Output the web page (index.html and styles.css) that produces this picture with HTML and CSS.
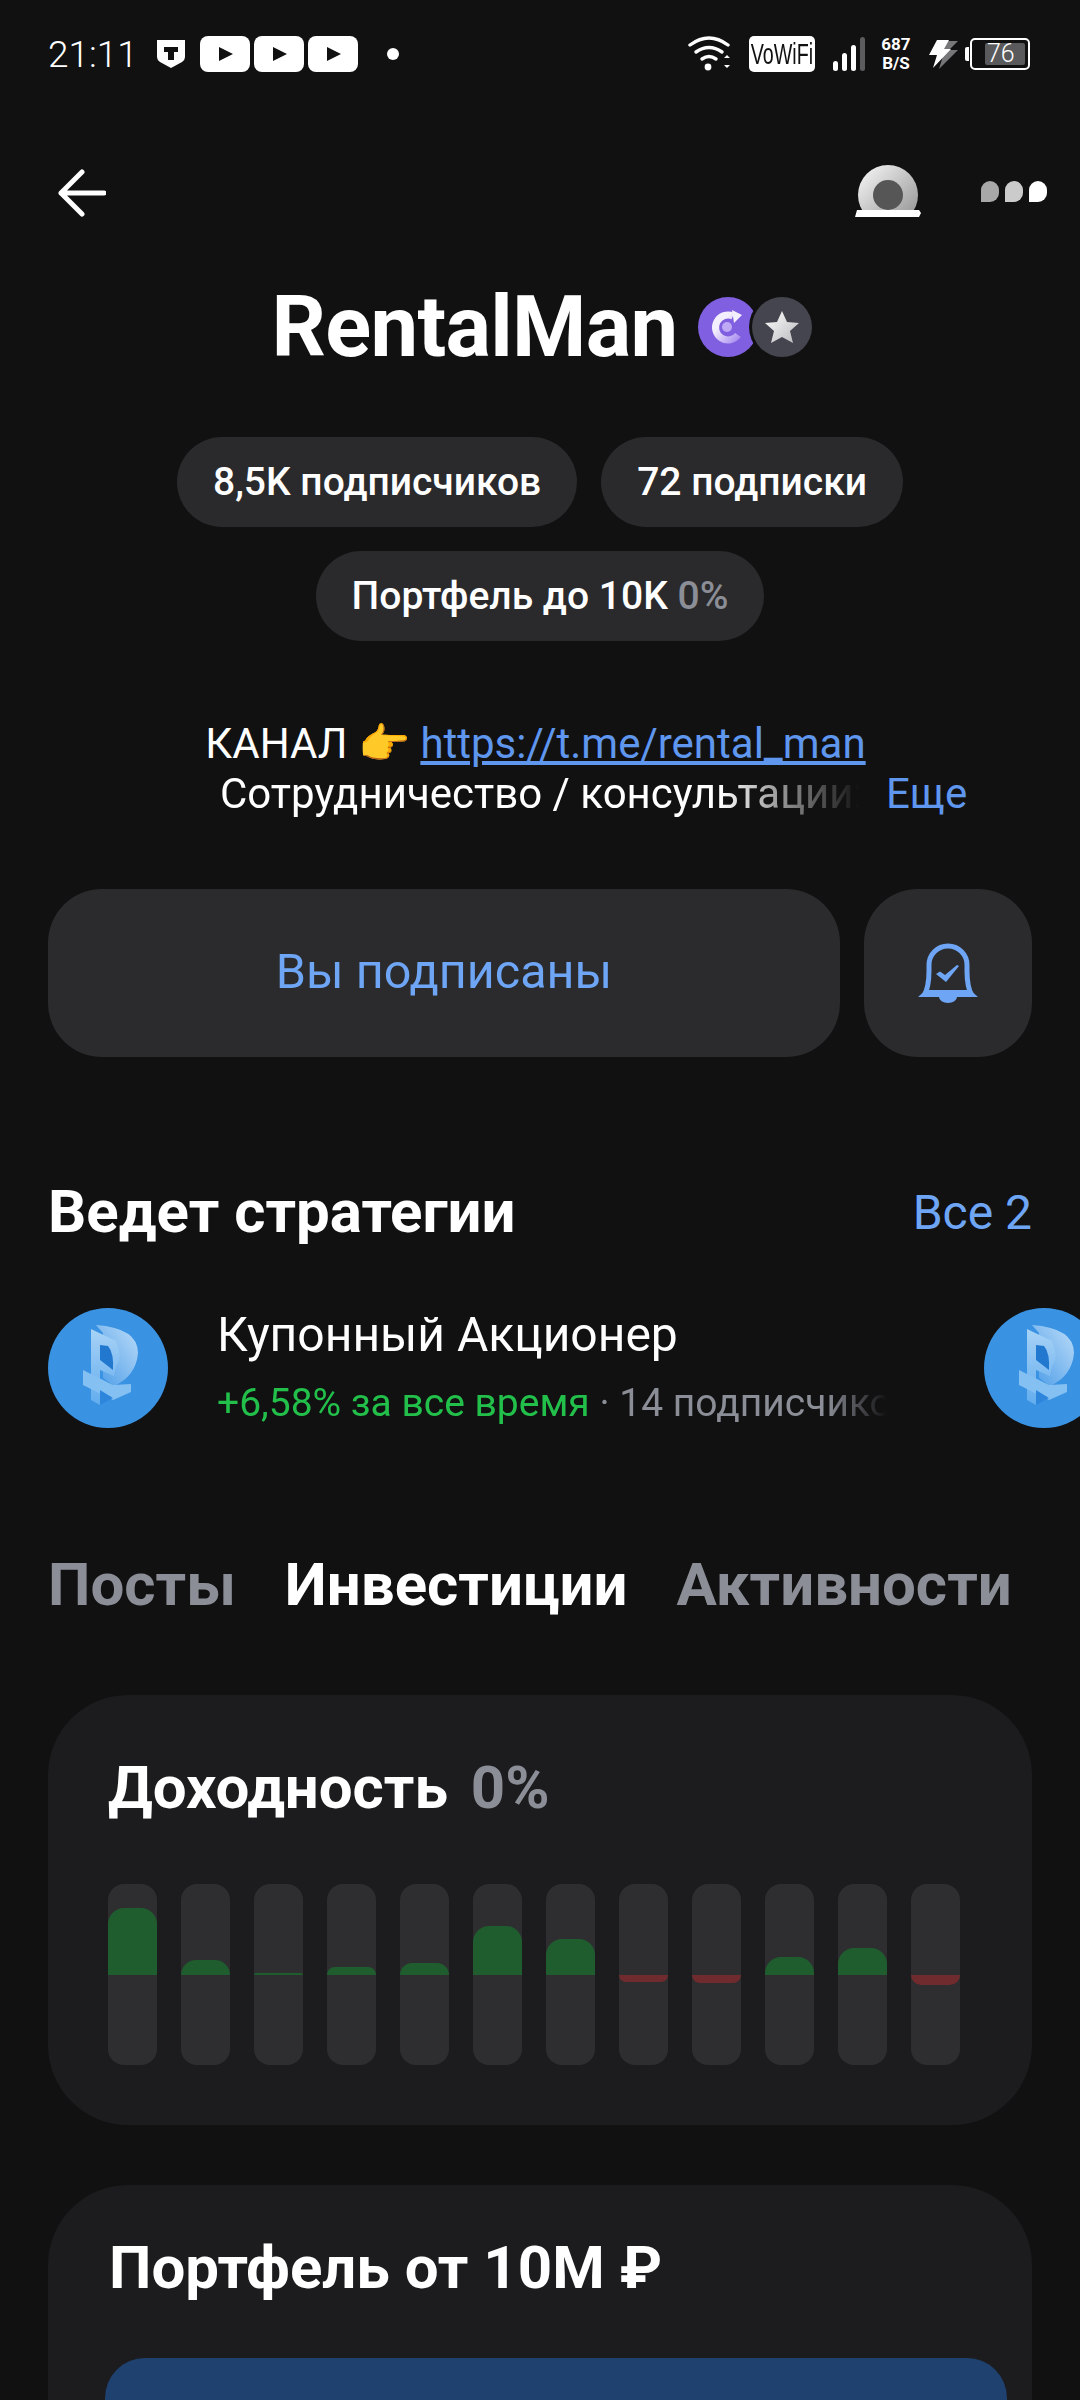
FILE: index.html
```html
<!DOCTYPE html>
<html lang="ru">

<head>
    <meta charset="UTF-8">
    <meta name="viewport" content="width=device-width, initial-scale=1.0">
    <title>RentalMan</title>
    <link rel="stylesheet" href="styles.css">
</head>

<body>
    <!-- Status bar -->
    <div class="statusBar">
        <div class="statusLeft">
            <span class="time">21:11</span>
            <svg class="shield" width="28" height="28" viewBox="0 0 28 28">
                <path d="M0 0h28v17q0 3-3 5l-11 6-11-6q-3-2-3-5z" fill="#fff"/>
                <path d="M7 7h14v5h-4v8h-6v-8H7z" fill="#111112"/>
            </svg>
            <div class="ytGroup">
                <svg width="50" height="36" viewBox="0 0 50 36"><rect width="50" height="36" rx="8" fill="#fff"/><path d="M19 11l14 7-14 7z" fill="#111112"/></svg>
                <svg width="50" height="36" viewBox="0 0 50 36"><rect width="50" height="36" rx="8" fill="#fff"/><path d="M19 11l14 7-14 7z" fill="#111112"/></svg>
                <svg width="50" height="36" viewBox="0 0 50 36"><rect width="50" height="36" rx="8" fill="#fff"/><path d="M19 11l14 7-14 7z" fill="#111112"/></svg>
            </div>
            <span class="statusDot"></span>
        </div>
        <div class="statusRight">
            <svg width="42" height="36" viewBox="0 0 42 36" fill="none" stroke="#fff" stroke-linecap="round">
                <path d="M2 9q19-14 38 0" stroke-width="3.4"/>
                <path d="M8 16q13-9 26 0" stroke-width="3.4"/>
                <path d="M14 23q7-5 14 0" stroke-width="3.4"/>
                <circle cx="20" cy="31" r="3.4" fill="#fff" stroke="none"/>
                <path d="M36 22l3-3 3 3zM36 29l3 3 3-3z" fill="#fff" stroke="none"/>
            </svg>
            <span class="vowifi"><span class="vowifiText">VoWiFi</span></span>
            <svg width="32" height="34" viewBox="0 0 32 34">
                <rect x="0" y="24" width="5" height="10" rx="2.5" fill="#fff"/>
                <rect x="9" y="16" width="5" height="18" rx="2.5" fill="#fff"/>
                <rect x="18" y="8" width="5" height="26" rx="2.5" fill="#fff"/>
                <rect x="27" y="0" width="5" height="34" rx="2.5" fill="#5c5c5e"/>
            </svg>
            <div class="netSpeed"><span>687</span><span>B/S</span></div>
            <svg class="bolt" width="30" height="30" viewBox="0 0 30 30">
                <path d="M14 2h15l-9 9h9L10 30l4-13H8z" fill="#77777a"/>
                <path d="M8 1h12l-5 9h7L4 29l4-13H0z" fill="#fff"/>
            </svg>
            <div class="battery">
                <span class="batteryNub"></span>
                <div class="batteryBody"><span class="batteryFill"></span><span class="batteryText">76</span></div>
            </div>
        </div>
    </div>

    <!-- Top actions -->
    <div class="topBar">
        <svg class="backArrow" width="48" height="48" viewBox="0 0 48 48" fill="none" stroke="#fff" stroke-width="5" stroke-linecap="round" stroke-linejoin="round">
            <path d="M46 24H3M24 3L3 24l21 21"/>
        </svg>
        <div class="topActions">
            <svg width="66" height="52" viewBox="0 0 66 52">
                <defs>
                    <linearGradient id="lens" x1="0" y1="0" x2="1" y2="1">
                        <stop offset="0" stop-color="#fafafa"/>
                        <stop offset="1" stop-color="#8d8d8d"/>
                    </linearGradient>
                </defs>
                <circle cx="33" cy="30" r="30" fill="url(#lens)"/>
                <circle cx="33" cy="30" r="15" fill="#565656"/>
                <path d="M0 52l2-7h62l2 3-2 4z" fill="#fff"/>
            </svg>
            <div class="moreDots">
                <span class="moreDot moreDot1"></span>
                <span class="moreDot moreDot2"></span>
                <span class="moreDot moreDot3"></span>
            </div>
        </div>
    </div>

    <!-- Profile -->
    <div class="profile">
        <div class="nameRow">
            <h1>RentalMan</h1>
            <div class="badges">
                <svg class="badgePurple" width="60" height="60" viewBox="0 0 60 60">
                    <defs>
                        <linearGradient id="coin" x1="0" y1="0" x2="1" y2="1">
                            <stop offset="0.3" stop-color="#f4effe"/>
                            <stop offset="1" stop-color="#a98ff0"/>
                        </linearGradient>
                    </defs>
                    <circle cx="30" cy="30" r="30" fill="#8060e0"/>
                    <path d="M35 19a12.500 12.500 0 1 0 5 19" fill="none" stroke="url(#coin)" stroke-width="7"/>
                    <circle cx="29" cy="30" r="5" fill="#bfa9f5"/>
                    <path d="M34 13l10 5-8 8z" fill="#f4effe"/>
                </svg>
                <div class="badgeGrey">
                    <svg width="36" height="36" viewBox="0 0 36 36">
                        <defs>
                            <linearGradient id="starFill" x1="0" y1="0" x2="1" y2="1">
                                <stop offset="0" stop-color="#ffffff"/>
                                <stop offset="1" stop-color="#b9b9bd"/>
                            </linearGradient>
                        </defs>
                        <path d="M18 2l5 11 12 1-9 8 3 12-11-6-11 6 3-12-9-8 12-1z" fill="url(#starFill)"/>
                    </svg>
                </div>
            </div>
        </div>
        <div class="pills">
            <span class="pill">8,5K подписчиков</span>
            <span class="pill">72 подписки</span>
            <span class="pill">Портфель до 10K <span class="muted">0%</span></span>
        </div>
        <div class="bio">
            <div class="bioFirst">КАНАЛ 👉 <a href="#">https://t.me/rental_man</a></div>
            <div class="bioSecond"><span class="bioFade">Сотрудничество / консультации: </span><a class="bioMore" href="#">Еще</a></div>
        </div>
        <div class="actions">
            <button class="subscribed">Вы подписаны</button>
            <button class="bell">
                <svg width="60" height="60" viewBox="0 0 60 60">
                    <path d="M6 53q5-9 5-25v-6a19 19 0 0 1 38 0v6q0 16 5 25" fill="none" stroke="#6ea6f5" stroke-width="5"/>
                    <path d="M0 54q5-4 7-7h46q2 3 7 7z" fill="#6ea6f5"/>
                    <path d="M21 54h18a9 6 0 0 1-18 0z" fill="#6ea6f5"/>
                    <path d="M18 31l4-2.500 5 3.500L39 22l2 1-13 16z" fill="#6ea6f5"/>
                </svg>
            </button>
        </div>
    </div>

    <!-- Strategies -->
    <div class="sectionHead">
        <h2>Ведет стратегии</h2>
        <a href="#">Все 2</a>
    </div>
    <div class="strategies">
        <div class="avatar">
            <svg width="120" height="120" viewBox="0 0 120 120">
                <defs>
                    <linearGradient id="bowl" x1="0" y1="1" x2="1" y2="0">
                        <stop offset="0" stop-color="#4a9ce8"/>
                        <stop offset="1" stop-color="#bcdcf8"/>
                    </linearGradient>
                    <linearGradient id="face" x1="0" y1="0" x2="0" y2="1">
                        <stop offset="0" stop-color="#a8d2f6"/>
                        <stop offset="1" stop-color="#62adee"/>
                    </linearGradient>
                </defs>
                <path d="M48 17q42 3 42 28q-2 23-24 33l-11-8V25z" fill="url(#bowl)"/>
                <path d="M43 21l25 12q7 17 0 25l-2 10-14-6v35l-9-5z" fill="url(#face)"/>
                <path d="M52 37l8 1q6 7 5 24l-13-10z" fill="#2277cf"/>
                <path d="M35 62l30 15 18-1v8l-18 8-30-15z" fill="#85c0f2"/>
                <path d="M52 82v15l13-7z" fill="#2e86dc"/>
            </svg>
        </div>
        <div class="strategyText">
            <div class="strategyName">Купонный Акционер</div>
            <div class="strategyMeta"><span class="gain">+6,58% за все время</span> · 14 подписчиков</div>
        </div>
        <div class="avatar">
            <svg width="120" height="120" viewBox="0 0 120 120">
                <path d="M48 17q42 3 42 28q-2 23-24 33l-11-8V25z" fill="url(#bowl)"/>
                <path d="M43 21l25 12q7 17 0 25l-2 10-14-6v35l-9-5z" fill="url(#face)"/>
                <path d="M52 37l8 1q6 7 5 24l-13-10z" fill="#2277cf"/>
                <path d="M35 62l30 15 18-1v8l-18 8-30-15z" fill="#85c0f2"/>
                <path d="M52 82v15l13-7z" fill="#2e86dc"/>
            </svg>
        </div>
    </div>

    <!-- Tabs -->
    <div class="tabs">
        <span>Посты</span>
        <span class="tabActive">Инвестиции</span>
        <span>Активности</span>
    </div>

    <!-- Yield card -->
    <div class="card yieldCard">
        <h3>Доходность <span class="cardMuted">0%</span></h3>
        <div class="bars">
            <div class="bar"><div class="barTop"><span class="up" style="height:67px"></span></div><div class="barBottom"></div></div>
            <div class="bar"><div class="barTop"><span class="up" style="height:15px"></span></div><div class="barBottom"></div></div>
            <div class="bar"><div class="barTop"><span class="up" style="height:2px"></span></div><div class="barBottom"></div></div>
            <div class="bar"><div class="barTop"><span class="up" style="height:8px"></span></div><div class="barBottom"></div></div>
            <div class="bar"><div class="barTop"><span class="up" style="height:12px"></span></div><div class="barBottom"></div></div>
            <div class="bar"><div class="barTop"><span class="up" style="height:49px"></span></div><div class="barBottom"></div></div>
            <div class="bar"><div class="barTop"><span class="up" style="height:36px"></span></div><div class="barBottom"></div></div>
            <div class="bar"><div class="barTop"></div><div class="barBottom"><span class="down" style="height:7px"></span></div></div>
            <div class="bar"><div class="barTop"></div><div class="barBottom"><span class="down" style="height:8px"></span></div></div>
            <div class="bar"><div class="barTop"><span class="up" style="height:18px"></span></div><div class="barBottom"></div></div>
            <div class="bar"><div class="barTop"><span class="up" style="height:27px"></span></div><div class="barBottom"></div></div>
            <div class="bar"><div class="barTop"></div><div class="barBottom"><span class="down" style="height:10px"></span></div></div>
        </div>
    </div>

    <!-- Portfolio card -->
    <div class="card portfolioCard">
        <h3>Портфель от 10М ₽</h3>
        <div class="portfolioBanner"></div>
    </div>
</body>

</html>
```
FILE: styles.css
```css
/* General */
html, body {
    margin: 0;
    padding: 0;
    height: 2400px;
    overflow: hidden;
}

body {
    width: 1080px;
    background-color: #111112;
    color: #fff;
    font-family: Roboto, "Noto Sans", sans-serif;
}

a {
    color: #6ea6f5;
}

h1, h2, h3 {
    margin: 0;
    font-weight: 700;
}

/* Status bar */
.statusBar {
    height: 36px;
    padding: 36px 50px 0 48px;
    display: flex;
    justify-content: space-between;
    align-items: center;
}

.statusLeft, .statusRight {
    display: flex;
    align-items: center;
}

.time {
    font-size: 37px;
    font-weight: 300;
    width: 109px;
}

.shield {
    margin-right: 15px;
}

.ytGroup {
    display: flex;
    gap: 4px;
}

.statusDot {
    width: 12px;
    height: 12px;
    margin-left: 29px;
    border-radius: 50%;
    background-color: #fff;
}

.vowifi {
    margin-left: 19px;
    width: 66px;
    height: 36px;
    border-radius: 5px;
    background-color: #fff;
    color: #111112;
    font-family: "Liberation Sans", sans-serif;
    font-size: 29px;
    line-height: 36px;
    display: flex;
    justify-content: center;
}

.vowifiText {
    display: inline-block;
    flex: none;
    transform: scaleX(0.68);
}

.statusRight svg:nth-of-type(2) {
    margin-left: 18px;
}

.netSpeed {
    margin-left: 15px;
    width: 32px;
    display: flex;
    flex-direction: column;
    align-items: center;
    font-size: 17px;
    font-weight: 700;
    line-height: 19px;
}

.bolt {
    margin-left: 17px;
}

.battery {
    margin-left: 6px;
    display: flex;
    align-items: center;
}

.batteryNub {
    width: 4px;
    height: 14px;
    background-color: #fff;
    border-radius: 2px 0 0 2px;
}

.batteryBody {
    position: relative;
    margin-left: 1px;
    width: 56px;
    height: 28px;
    border: 2px solid #fff;
    border-radius: 5px;
}

.batteryFill {
    position: absolute;
    top: 3px;
    bottom: 3px;
    right: 3px;
    width: 40px;
    border-radius: 2px;
    background-color: #5a5a5c;
}

.batteryText {
    position: absolute;
    left: 15px;
    top: 0;
    font-size: 25px;
    font-weight: 300;
    line-height: 28px;
}

/* Top actions */
.topBar {
    padding: 93px 33px 0 58px;
    height: 52px;
    display: flex;
    justify-content: space-between;
    align-items: center;
}

.backArrow {
    margin-top: 4px;
}

.topActions {
    display: flex;
    align-items: center;
    gap: 60px;
}

.moreDots {
    display: flex;
    gap: 6px;
}

.moreDot {
    width: 18px;
    height: 21px;
    border-radius: 9px 9px 9px 0;
}

.moreDot1 { background-color: #a8a8a8; }
.moreDot2 { background-color: #cbcbcb; }
.moreDot3 { background-color: #fff; }

/* Profile */
.profile {
    padding: 0 48px;
}

.nameRow {
    margin-top: 63px;
    display: flex;
    justify-content: center;
    align-items: center;
    gap: 20px;
    padding-left: 3px;
}

h1 {
    font-size: 85px;
    line-height: 94px;
    letter-spacing: -0.7px;
}

.badges {
    display: flex;
}

.badgeGrey {
    position: relative;
    width: 60px;
    height: 60px;
    margin-left: -6px;
    border-radius: 50%;
    background-color: #45454f;
    box-shadow: 0 0 0 3px #111112;
    display: flex;
    align-items: center;
    justify-content: center;
}

.pills {
    margin-top: 63px;
    display: flex;
    flex-wrap: wrap;
    justify-content: center;
    gap: 24px;
    padding: 0 60px;
}

.pill {
    height: 90px;
    padding: 0 36px;
    border-radius: 45px;
    background-color: #2a2a2c;
    font-size: 39px;
    font-weight: 500;
    line-height: 90px;
}

.muted {
    color: #8b8e96;
}

.bio {
    margin-top: 78px;
    font-size: 42px;
    line-height: 50px;
    text-align: center;
}

.bio a {
    color: #5f96ee;
}

.bioFirst {
    padding-right: 9px;
}

.bioSecond {
    display: flex;
    padding-left: 172px;
}

.bioFade {
    flex: none;
    width: 640px;
    overflow: hidden;
    white-space: nowrap;
    -webkit-mask-image: linear-gradient(to right, #000 78%, transparent 100%);
    mask-image: linear-gradient(to right, #000 78%, transparent 100%);
    text-align: left;
}

.bioMore {
    margin-left: 26px;
    text-decoration: none;
}

.actions {
    margin-top: 70px;
    display: flex;
    gap: 24px;
}

.actions button {
    height: 168px;
    border: none;
    border-radius: 54px;
    background-color: #2b2b2d;
    color: #6ea6f5;
    font-family: inherit;
    padding: 0;
}

.actions .subscribed {
    flex: 1;
    padding-bottom: 3px;
    font-size: 48.5px;
}

.bell {
    width: 168px;
    display: flex;
    align-items: center;
    justify-content: center;
}

/* Strategies */
.sectionHead {
    margin-top: 122px;
    padding: 0 48px;
    display: flex;
    justify-content: space-between;
    align-items: center;
}

h2 {
    font-size: 60px;
    line-height: 66px;
}

.sectionHead a {
    font-size: 48px;
    text-decoration: none;
}

.strategies {
    margin-top: 62px;
    padding-left: 48px;
    display: flex;
    align-items: center;
    overflow: hidden;
}

.avatar {
    flex: none;
    width: 120px;
    height: 120px;
    border-radius: 50%;
    background-color: #3a92e2;
}

.strategyText {
    flex: none;
    width: 670px;
    margin: 0 97px 0 49px;
    padding-bottom: 3px;
    -webkit-mask-image: linear-gradient(to right, #000 91%, transparent 100%);
    mask-image: linear-gradient(to right, #000 91%, transparent 100%);
    overflow: hidden;
    white-space: nowrap;
}

.strategyName {
    font-size: 48px;
    line-height: 56px;
}

.strategyMeta {
    margin-top: 18px;
    font-size: 39px;
    line-height: 44px;
    color: #8b8e96;
}

.gain {
    color: #22c04a;
}

/* Tabs */
.tabs {
    margin-top: 124px;
    padding-left: 48px;
    display: flex;
    gap: 49px;
    font-size: 60px;
    font-weight: 700;
    line-height: 66px;
    color: #8b8e96;
}

.tabActive {
    color: #fff;
}

/* Cards */
.card {
    margin: 0 48px;
    border-radius: 80px;
    background-color: #1c1c1e;
    padding-left: 60px;
}

h3 {
    font-size: 60px;
    line-height: 66px;
}

.cardMuted {
    margin-left: 8px;
    color: #8b8e96;
}

.yieldCard {
    margin-top: 77px;
    height: 430px;
    padding-top: 60px;
    box-sizing: border-box;
}

.bars {
    margin-top: 63px;
    display: flex;
    gap: 24px;
}

.bar {
    width: 49px;
    height: 181px;
    display: flex;
    flex-direction: column;
    border-radius: 16px;
    overflow: hidden;
    background-color: #2e2e30;
}

.barTop, .barBottom {
    flex: 1;
    display: flex;
    flex-direction: column;
}

.barTop {
    justify-content: flex-end;
}

.up {
    display: block;
    border-radius: 16px 16px 0 0;
    background-color: #1f5d2e;
}

.down {
    display: block;
    border-radius: 0 0 12px 12px;
    background-color: #6f2b2d;
}

.portfolioCard {
    margin-top: 60px;
    height: 300px;
    padding: 50px 25px 0 57px;
    box-sizing: border-box;
}

.portfolioCard h3 {
    padding-left: 4px;
}

.portfolioBanner {
    margin-top: 57px;
    height: 120px;
    border-radius: 40px;
    background-color: #1f416f;
}
```
